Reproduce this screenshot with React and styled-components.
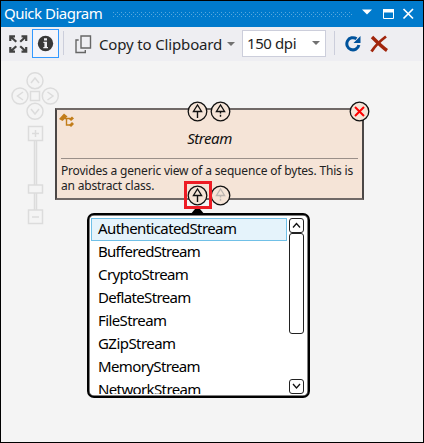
import React from "react";
import styled, { createGlobalStyle } from "styled-components";

const Global = createGlobalStyle`
  * { box-sizing: border-box; }
  body { margin: 0; font-family: "Noto Sans", "Open Sans", sans-serif; color: #1e1e1e; }
  svg { display: block; flex: none; }
`;

const Panel = styled.main`
  width: 424px; height: 443px; border: 1px solid #000; background: #f4f4f4;
  display: flex; flex-direction: column; overflow: hidden;
`;
const TitleBar = styled.header`
  height: 26px; background: #007acc; color: #fff; display: flex; align-items: center;
  padding: 0 0 2px 3px; flex: none;
`;
const Label = styled.span`
  font-size: 15px; letter-spacing: ${(p) => p.$track || 0}px;
  width: ${(p) => (p.$width ? `${p.$width}px` : "auto")}; white-space: nowrap; line-height: 22px; flex: none;
`;
const Grip = styled.svg`margin: 2px 9px 0;`;
const Toolbar = styled.div`
  height: 34px; background: #eeeef2; display: flex; align-items: center; flex: none; padding-left: 8px;
`;
const Toggle = styled.div`
  width: 27px; height: 29px; border: 1px solid #3399ff; margin: 2px 4px 0; background: #f5f5fa;
  display: flex; align-items: center; justify-content: center; align-self: flex-start;
`;
const Separator = styled.div`
  width: 1px; height: 24px; background: #cccedb; margin-right: ${(p) => p.$gap}px; margin-top: -2px;
`;
const CopyButton = styled.div`display: flex; align-items: center; gap: 7px; width: 160px;`;
const Combo = styled.div`
  width: 84px; height: 27px; border: 1px solid #cccedb; background: #fff; margin: -2px 8px 0 7px;
  display: flex; align-items: center; justify-content: space-between; padding: 0 5px 0 4px;
`;
const Canvas = styled.section`position: relative; flex: 1;`;
const Navigator = styled.svg`position: absolute; left: 9px; top: 11px;`;
const ClassNode = styled.article`
  position: absolute; left: 54px; top: 47px; width: 309px; height: 92px; background: #f5e4d7;
  border: 2px solid #4b4746; border-top-color: #706967; border-bottom-color: #706967;
  padding: 17px 4px 0;
`;
const NodeTitle = styled.h1`
  margin: 0; height: 32px; border-bottom: 1px solid #9a8f89; font-size: 15px; line-height: 22px;
  font-style: italic; font-weight: 400; text-align: center; color: #111;
  letter-spacing: -0.45px;
`;
const Description = styled.p`
  margin: 4px 0 0; font-size: 12px; line-height: 15px; color: #222; letter-spacing: -0.18px;
`;
const NodeIcon = styled.svg`position: absolute; left: 1px; top: 2px;`;
const Badge = styled.svg`position: absolute; left: ${(p) => p.$x}px; top: ${(p) => p.$y}px;`;
const Highlight = styled.div`
  position: absolute; left: 183px; top: 120px; width: 28px; height: 28px; border: 3px solid #ed1c24;
`;
const Pointer = styled.svg`position: absolute; left: 188px; top: 144px;`;
const Popup = styled.div`
  position: absolute; left: 86px; top: 152px; width: 223px; height: 185px; background: #fff;
  border: 2px solid #000; border-radius: 7px; padding: 3px 2px 2px 2px; display: flex; gap: 2px;
  box-shadow: inset 0 0 0 0.5px #000;
`;
const List = styled.ul`
  margin: 0; padding: 0; list-style: none; width: 196px; height: 176px; overflow: hidden;
`;
const Item = styled.li`
  height: 23px; padding: 0 0 3px 6px; display: flex; align-items: center; color: #000;
  border: 1px solid ${(p) => (p.$selected ? "#70c0e7" : "transparent")};
  background: ${(p) => (p.$selected ? "#e5f3fb" : "transparent")};
`;
const ScrollBar = styled.div`display: flex; flex-direction: column; width: 15px; height: 176px;`;
const ScrollPart = styled.div`
  height: ${(p) => p.$height}px; border: 1px solid #222; border-radius: 3px; flex: none;
  display: flex; align-items: center; justify-content: center;
`;
const Track = styled.div`flex: 1;`;

const streams = [
  ["AuthenticatedStream", -0.6], ["BufferedStream", -0.7], ["CryptoStream", -0.6],
  ["DeflateStream", -0.66], ["FileStream", -0.6], ["GZipStream", -0.55],
  ["MemoryStream", -0.62], ["NetworkStream", -0.62],
];

const Caret = () => (
  <svg width="8" height="4"><path d="M0 0H8L4 4Z" fill="#717171" /></svg>
);

const Chevron = ({ down }) => (
  <svg width="9" height="7"><path d={down ? "M1 1L4.5 5L8 1" : "M1 5.5L4.5 1.5L8 5.5"} fill="none" stroke="#111" strokeWidth="1.3" /></svg>
);

const ArrowBadge = ({ x, y, dashed, color = "#111" }) => (
  <Badge $x={x} $y={y} width="21" height="21">
    <circle cx="10.5" cy="10.5" r="9.3" fill="#f5e4d7" stroke="#111" strokeWidth="1.3" />
    <path d="M6.4 10.5L10.5 4L14.6 10.5Z" fill="none" stroke={color} strokeWidth="1.3" />
    <path d="M10.5 10.5V17" stroke={color} strokeWidth="1.4" strokeDasharray={dashed ? "2 1.3" : undefined} />
  </Badge>
);

export default function App() {
  return (
    <Panel>
      <Global />
      <TitleBar>
        <Label $track={-0.5} $width={100}>Quick Diagram</Label>
        <Grip width="239" height="5">
          <defs>
            <pattern id="grip" width="4" height="4" patternUnits="userSpaceOnUse">
              <path d="M0 0H1V1H0ZM2 2H3V3H2Z" fill="#59a8de" />
            </pattern>
          </defs>
          <rect width="239" height="5" fill="url(#grip)" />
        </Grip>
        <svg width="56" height="14">
          <path d="M1 3.5H11L6 8.5Z" fill="#fff" />
          <path d="M22.5 3.5H32.5V12.5H22.5Z" fill="none" stroke="#fff" />
          <path d="M22 3H33V6.5H22Z" fill="#fff" />
          <path d="M42.5 3L52 12.5M52 3L42.5 12.5" stroke="#fff" strokeWidth="1.7" />
        </svg>
      </TitleBar>
      <Toolbar>
        <svg width="19" height="18" fill="none" stroke="#424242" strokeWidth="2.2">
          <path d="M1.3 6V1.3H6M12.5 1.3H17.2V6M17.2 12V16.7H12.5M6 16.7H1.3V12M2 2L7.3 6.8M16.5 2L11.2 6.8M16.5 16L11.2 11.2M2 16L7.3 11.2" />
        </svg>
        <Toggle>
          <svg width="17" height="17">
            <circle cx="8.5" cy="8.5" r="7.7" fill="#383838" />
            <path d="M7 3.2H10V5.4H7ZM6.4 6.8H10V12H11V13.3H6.3V12H7.4V8H6.4Z" fill="#eeeef2" />
          </svg>
        </Toggle>
        <Separator $gap={11} />
        <CopyButton>
          <svg width="17" height="19" fill="none" stroke="#666" strokeWidth="1.4">
            <path d="M6 1H15.5V13H6ZM3.7 5H1V17.5H10.3V15" />
          </svg>
          <Label $track={-0.15} $width={121}>Copy to Clipboard</Label>
          <Caret />
        </CopyButton>
        <Combo><Label $track={-0.4} $width={50}>150 dpi</Label><Caret /></Combo>
        <Separator $gap={10} />
        <svg width="18" height="20" fill="none">
          <path d="M11.5 4.8A6.1 6.1 0 1 0 13.9 11" stroke="#00539c" strokeWidth="3" />
          <path d="M15.5 2V9H8.5Z" fill="#00539c" />
        </svg>
        <svg width="26" height="18" fill="none">
          <path d="M9 2C12 5 19 12 24 15.5" stroke="#a1260d" strokeWidth="3.4" />
          <path d="M23 1.5C17 6 12 11 8.5 16.5" stroke="#a1260d" strokeWidth="2.8" />
        </svg>
      </Toolbar>
      <Canvas>
        <Navigator width="52" height="156" fill="none" stroke="#dcdcdc" strokeWidth="1.5">
          <circle cx="25" cy="8.7" r="8" /><circle cx="10" cy="24" r="8" />
          <circle cx="40.3" cy="24" r="8" /><circle cx="25" cy="39.3" r="8" />
          <path d="M20.5 19.5H29.5V28.5H20.5ZM21 11L25 6L29 11M21 37L25 42L29 37M13 20L7.5 24L13 28M37.5 20L43 24L37.5 28" />
          <path d="M18.5 54.5H32.5V68.5H18.5ZM22 61.5H29M25.5 58V65M24.5 69V113M26.5 69V113M18.5 113H32.5V121H18.5ZM24.5 121V138M26.5 121V138M18.5 138H32.5V151.5H18.5ZM22 145H29" />
        </Navigator>
        <ClassNode>
          <NodeIcon width="18" height="18">
            <path d="M1 7L6 1.5L9.5 4.5L4.5 9Z" fill="#c27d1a" />
            <path d="M7 6.5H12M8.5 7V13H12" fill="none" stroke="#c27d1a" strokeWidth="1.4" />
            <path d="M11 7L14 4.5L16 6.5L13 9ZM11 13L14 10L16 12L13 15Z" fill="#c27d1a" />
          </NodeIcon>
          <NodeTitle>Stream</NodeTitle>
          <Description>
            Provides a generic view of a sequence of bytes. This is an abstract class.
          </Description>
        </ClassNode>
        <ArrowBadge x={186} y={40} />
        <ArrowBadge x={209} y={40} dashed />
        <Badge $x={348} $y={40} width="21" height="21">
          <circle cx="10.5" cy="10.5" r="9.3" fill="#f5e4d7" stroke="#111" strokeWidth="1.3" />
          <path d="M6 6L15 15M15 6L6 15" stroke="#f00" strokeWidth="2" />
        </Badge>
        <Pointer width="17" height="10"><path d="M1 10L6 4H11L16 10Z" fill="#000" /></Pointer>
        <ArrowBadge x={186} y={124} />
        <ArrowBadge x={209} y={124} dashed color="#bcb5b0" />
        <Highlight />
        <Popup>
          <List>
            {streams.map(([name, track], i) => (
              <Item key={name} $selected={i === 0}><Label $track={track}>{name}</Label></Item>
            ))}
          </List>
          <ScrollBar>
            <ScrollPart $height={15}><Chevron /></ScrollPart>
            <ScrollPart $height={101} />
            <Track />
            <ScrollPart $height={15}><Chevron down /></ScrollPart>
          </ScrollBar>
        </Popup>
      </Canvas>
    </Panel>
  );
}
